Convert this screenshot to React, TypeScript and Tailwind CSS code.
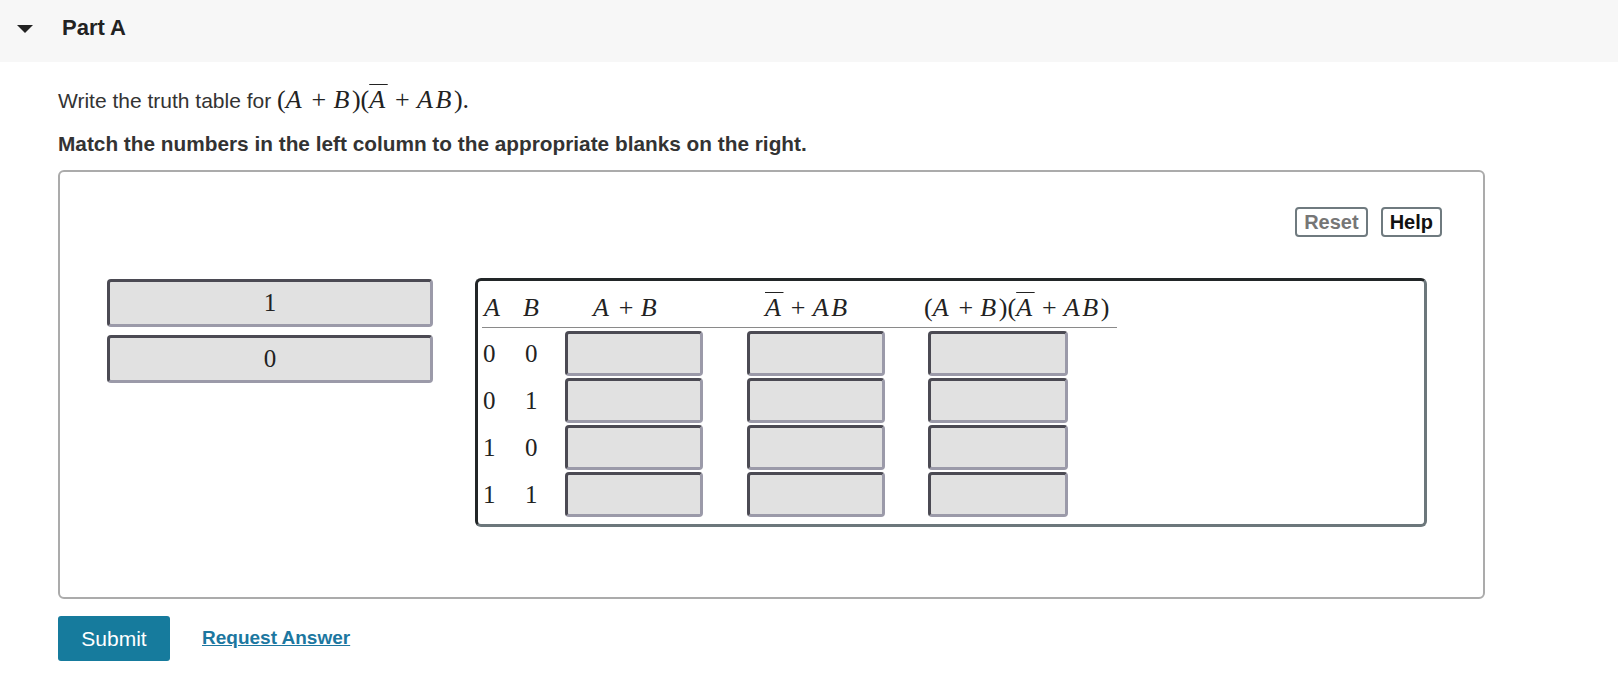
import React from "react";

const SANS = "font-['Liberation_Sans',Arial,Helvetica,sans-serif]";
const SERIF = "font-['Liberation_Serif','Times_New_Roman',serif]";

// small helpers for the TeX-looking expressions
const V = ({ children }: { children: React.ReactNode }) => (
  <span className="italic tracking-[0.1em]">{children}</span>
);
const Plus = () => <span className="mx-[0.28em]">+</span>;
const ABar = () => <span className="italic tracking-[0.1em] overline decoration-1">A</span>;

const FullExpr = () => (
  <>
    (<V>A</V>
    <Plus />
    <V>B</V>)(<ABar />
    <Plus />
    <V>AB</V>)
  </>
);

const dropBox =
  "bg-[#e1e1e1] rounded-[4px] border-[3px] border-t-[#4b4a53] border-l-[#4b4a53] border-r-[#9b9aa9] border-b-[#9b9aa9]";

const ROWS = [
  ["0", "0"],
  ["0", "1"],
  ["1", "0"],
  ["1", "1"],
];

const TruthTable = () => (
  <div
    className={`w-[952px] h-[249px] rounded-[6px] border-[3px] border-t-[#222628] border-l-[#222628] border-r-[#6c777b] border-b-[#6c777b] pl-[4px] ${SERIF} text-[25px] text-[#222]`}
  >
    {/* header */}
    <div className="w-[635px] h-[47px] pt-[14px] flex border-b border-[#8a8a8a] text-[26px] leading-[25px] whitespace-nowrap">
      <div className="w-[38px] pl-[2px]">
        <V>A</V>
      </div>
      <div className="w-[73px] pl-[3px]">
        <V>B</V>
      </div>
      <div className="w-[172px]">
        <V>A</V>
        <Plus />
        <V>B</V>
      </div>
      <div className="w-[159px]">
        <ABar />
        <Plus />
        <V>AB</V>
      </div>
      <div>
        <FullExpr />
      </div>
    </div>

    {/* rows */}
    <div className="mt-[3px] flex flex-col gap-[2px]">
      {ROWS.map(([a, b], i) => (
        <div key={i} className="flex items-center h-[45px] leading-[25px]">
          <div className="w-[38px] pl-px">{a}</div>
          <div className="w-[45px] pl-[5px]">{b}</div>
          <div className={`w-[138px] h-[45px] ${dropBox}`} />
          <div className={`ml-[44px] w-[138px] h-[45px] ${dropBox}`} />
          <div className={`ml-[43px] w-[140px] h-[45px] ${dropBox}`} />
        </div>
      ))}
    </div>
  </div>
);

export default function App() {
  return (
    <div className={`min-h-screen bg-white text-[#333] ${SANS}`}>
      {/* Part header */}
      <div className="h-[62px] bg-[#f7f7f7] flex items-center">
        <svg className="ml-[17px] mb-[5px] w-4 h-2" viewBox="0 0 16 8">
          <path d="M0 0h16L8 8z" fill="#222" />
        </svg>
        <h2 className="ml-[29px] mb-[8px] text-[22px] font-bold text-[#222]">Part A</h2>
      </div>

      <div className="pl-[58px]">
        <p className="mt-[21px] text-[21px] leading-[34px]">
          Write the truth table for{" "}
          <span className={`${SERIF} text-[26px] text-[#222]`}>
            <FullExpr />.
          </span>
        </p>
        <p className="mt-[12px] text-[20.8px] leading-[28px] font-bold">
          Match the numbers in the left column to the appropriate blanks on the right.
        </p>

        {/* drag & drop area */}
        <div className="mt-[12px] w-[1427px] h-[429px] border-2 border-[#ababab] rounded-[6px] pt-[35px]">
          <div className="flex justify-end gap-[13px] pr-[41px]">
            <button className="h-[30px] px-[7px] border-2 border-[#6f7a7f] rounded-[4px] text-[20px] font-bold text-[#767676] leading-none">
              Reset
            </button>
            <button className="h-[30px] px-[7px] border-2 border-[#6f7a7f] rounded-[4px] text-[20px] font-bold text-[#111] leading-none">
              Help
            </button>
          </div>

          <div className="mt-[41px] flex pl-[47px]">
            <div className={`mt-px w-[326px] flex flex-col gap-[8px] ${SERIF} text-[25px] text-[#222]`}>
              {["1", "0"].map((n) => (
                <div key={n} className={`h-[48px] flex items-center justify-center ${dropBox}`}>
                  {n}
                </div>
              ))}
            </div>
            <div className="ml-[42px]">
              <TruthTable />
            </div>
          </div>
        </div>

        {/* actions */}
        <div className="mt-[17px] flex items-center gap-[32px]">
          <button className="w-[112px] h-[45px] bg-[#167b9d] rounded-[3px] text-white text-[21px]">Submit</button>
          <a href="#" className="text-[19px] font-bold text-[#1c77a0] underline">
            Request Answer
          </a>
        </div>
      </div>
    </div>
  );
}
